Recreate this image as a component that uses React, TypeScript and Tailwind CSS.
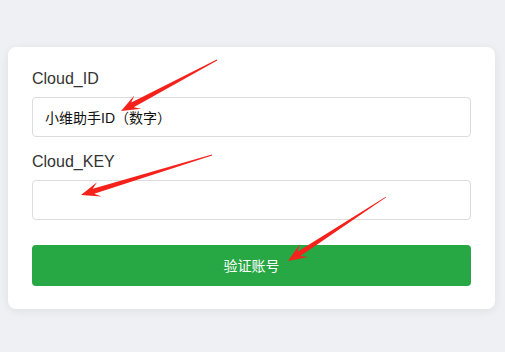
import React from "react";

type Pt = [number, number];

// annotation arrow: thin tail, widening shaft, notched head
function arrowPoints(tail: Pt, tip: Pt) {
  const dx = tip[0] - tail[0];
  const dy = tip[1] - tail[1];
  const len = Math.hypot(dx, dy);
  const ux = dx / len;
  const uy = dy / len;
  const nx = -uy;
  const ny = ux;
  const at = (back: number, side: number): string =>
    `${(tip[0] - ux * back + nx * side).toFixed(1)},${(tip[1] - uy * back + ny * side).toFixed(1)}`;
  const t = (side: number) =>
    `${(tail[0] + nx * side).toFixed(1)},${(tail[1] + ny * side).toFixed(1)}`;
  return [t(0.4), at(13, 2.6), at(19, 7.5), at(0, 0), at(19, -7.5), at(13, -2.6), t(-0.4)].join(" ");
}

const arrows: [Pt, Pt][] = [
  [[217, 60], [121, 111]],
  [[212, 155], [81, 195]],
  [[386, 197], [288, 261]],
];

export default function App() {
  const font = { fontFamily: '"Liberation Sans", Arial, "Noto Sans CJK SC", sans-serif' };

  return (
    <div className="relative min-h-screen bg-[#eff0f4] pt-[47px]" style={font}>
      <div className="ml-2 w-[487px] rounded-lg bg-white px-6 pt-5 pb-[23px] shadow-[0_2px_10px_rgba(0,0,0,0.07)]">
        <label className="mb-[6px] block text-base leading-6 text-[#333]">Cloud_ID</label>
        <input
          className="block h-10 w-full rounded border border-[#dcdcdc] px-3 text-sm text-[#111] outline-none"
          defaultValue="小维助手ID（数字）"
        />
        <label className="mt-[13px] mb-[6px] block text-base leading-6 text-[#333]">Cloud_KEY</label>
        <input className="block h-10 w-full rounded border border-[#dcdcdc] px-3 text-sm outline-none" />
        <button className="mt-[25px] block h-[41px] w-full rounded bg-[#28a745] text-sm text-white">
          验证账号
        </button>
      </div>

      <svg
        className="pointer-events-none absolute left-0 top-0"
        width="505"
        height="352"
        viewBox="0 0 505 352"
      >
        {arrows.map(([tail, tip], i) => (
          <polygon key={i} points={arrowPoints(tail, tip)} fill="#f5221b" />
        ))}
      </svg>
    </div>
  );
}
